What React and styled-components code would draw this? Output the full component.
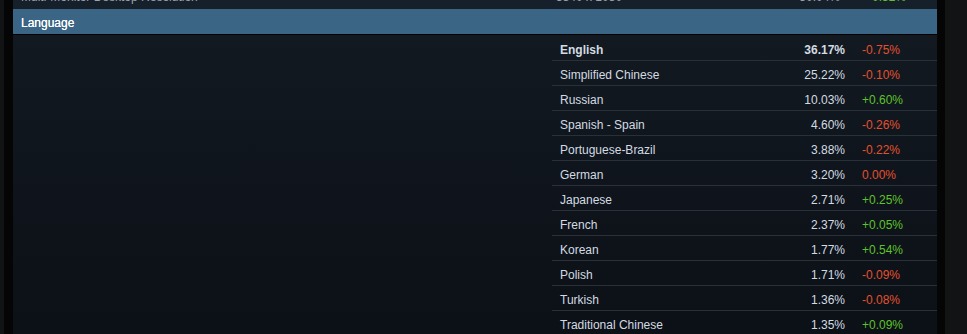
import styled, { createGlobalStyle } from "styled-components"

const Global = createGlobalStyle`
body {
    margin: 0;
    background: #121314;
    font-family: "Liberation Sans", Arial, sans-serif;
    font-size: 12px;
    color: #d3dbe2;
}
`

const Frame = styled.div`
    margin: 0 22px 0 4px;
    padding: 0 8px 0 9px;
    background: #050505;
    height: 334px;
    overflow: hidden;
`

const Panel = styled.div`
    display: flex;
    flex-direction: column;
    height: 100%;
    background: linear-gradient(to bottom, #131a22, #0c1017);

    & > * {
        flex-shrink: 0;
    }
`

const PrevRow = styled.div`
    height: 9px;
    overflow: hidden;
    background: #16202b;
    color: #9aa5ad;

    div {
        display: grid;
        grid-template-columns: 535px 230px 54px 1fr;
        margin-top: -9px;
        line-height: 12px;
        padding-left: 8px;
    }

    span:nth-child(3) {
        text-align: right;
    }

    span:nth-child(4) {
        padding-left: 25px;
        color: #5ec22a;
    }
`

const Header = styled.div`
    height: 26px;
    box-sizing: border-box;
    padding: 4px 0 0 8px;
    line-height: 20px;
    background: #3a6585;
    border-bottom: 1px solid #000;
    color: #fff;
    text-shadow: 0 0 0.6px #fff;
`

const Body = styled.div`
    display: flex;
    justify-content: flex-end;
    padding-top: 1px;
`

const Table = styled.div`
    width: 385px;
`

const Row = styled.div`
    display: grid;
    grid-template-columns: 1fr 60px 75px;
    column-gap: 17px;
    height: 25px;
    box-sizing: border-box;
    padding: 4px 0 0 8px;
    line-height: 20px;
    border-bottom: 1px solid #2a3037;
    font-weight: ${p => (p.$bold ? "bold" : "normal")};
`

const Pct = styled.span`
    text-align: right;
`

const Change = styled.span`
    font-weight: normal;
    color: ${p => (p.$up ? "#5ec22a" : "#e2512f")};
`

const langs = [
    ["English", "36.17%", "-0.75%"],
    ["Simplified Chinese", "25.22%", "-0.10%"],
    ["Russian", "10.03%", "+0.60%"],
    ["Spanish - Spain", "4.60%", "-0.26%"],
    ["Portuguese-Brazil", "3.88%", "-0.22%"],
    ["German", "3.20%", "0.00%"],
    ["Japanese", "2.71%", "+0.25%"],
    ["French", "2.37%", "+0.05%"],
    ["Korean", "1.77%", "+0.54%"],
    ["Polish", "1.71%", "-0.09%"],
    ["Turkish", "1.36%", "-0.08%"],
    ["Traditional Chinese", "1.35%", "+0.09%"],
]

export default function App() {
    return (
        <>
            <Global />
            <Frame>
                <Panel>
                    <PrevRow>
                        <div>
                            <span>Multi-Monitor Desktop Resolution</span>
                            <span>3840 x 1080</span>
                            <span>30.04%</span>
                            <span>+0.32%</span>
                        </div>
                    </PrevRow>
                    <Header>Language</Header>
                    <Body>
                        <Table>
                            {langs.map(([name, pct, change], i) => (
                                <Row key={name} $bold={i === 0}>
                                    <span>{name}</span>
                                    <Pct>{pct}</Pct>
                                    <Change $up={change.startsWith("+")}>{change}</Change>
                                </Row>
                            ))}
                        </Table>
                    </Body>
                </Panel>
            </Frame>
        </>
    )
}
